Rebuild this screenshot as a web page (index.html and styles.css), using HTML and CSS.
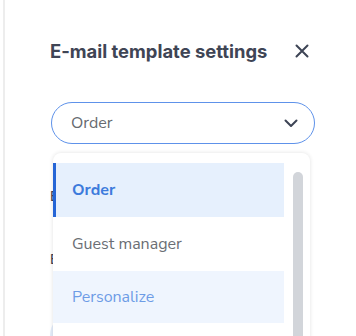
FILE: index.html
```html
<!DOCTYPE html>
<html lang="en">
<head>
    <meta charset="UTF-8">
    <title>E-mail template settings</title>
    <link rel="stylesheet" href="styles.css">
</head>
<body>
<div class="panel">
    <div class="panelhead">
        <div class="paneltitle">E-mail template settings</div>
        <div class="panelclose">
            <svg width="14" height="14" viewBox="0 0 14 14"><path d="M1.5 1.5L12.5 12.5M12.5 1.5L1.5 12.5" stroke="#3d4455" stroke-width="2" stroke-linecap="round"/></svg>
        </div>
    </div>

    <div class="selectbox">
        <div class="selecttext">Order</div>
        <svg class="selectarrow" width="14" height="9" viewBox="0 0 14 9"><path d="M1.5 1.5L7 7L12.5 1.5" fill="none" stroke="#3d4455" stroke-width="2" stroke-linecap="round" stroke-linejoin="round"/></svg>
    </div>

    <div class="formrow">
        <div class="formlabel">E</div>
    </div>
    <div class="formrow">
        <div class="formlabel">E</div>
        <div class="forminput"></div>
    </div>

    <div class="dropmenu">
        <div class="droplist">
            <div class="dropitem active">Order</div>
            <div class="dropitem">Guest manager</div>
            <div class="dropitem hover">Personalize</div>
        </div>
        <div class="dropscroll"><div class="dropthumb"></div></div>
    </div>
</div>
</body>
</html>
```

FILE: styles.css
```css
html, body{
    margin: 0;
    padding: 0;
    background: #ffffff;
}

body{
    font-family: "Nunito Sans", "Open Sans", "Liberation Sans", sans-serif;
    overflow: hidden;
}

.panel{
    position: relative;
    height: 336px;
    margin-left: 3px;
    border-left: 2px solid #ededed;
    padding-left: 45px;
    padding-right: 40px;
    box-sizing: border-box;
}

.panelhead{
    display: flex;
    align-items: center;
    justify-content: space-between;
    padding-top: 38px;
    height: 26px;
    padding-right: 7px;
}

.paneltitle{
    font-family: Inter, "Liberation Sans", sans-serif;
    font-size: 18.4px;
    font-weight: 700;
    color: #3f4555;
}

.panelclose{
    width: 14px;
    height: 14px;
    display: flex;
}

.selectbox{
    margin-top: 38px;
    height: 40px;
    border: 1.5px solid #5e92ea;
    border-radius: 22px;
    display: flex;
    align-items: center;
    justify-content: space-between;
    padding: 0 16px 0 19px;
    margin-left: 1px;
    margin-right: 1px;
}

.selecttext{
    font-size: 16px;
    color: #666a70;
}

.selectarrow{
    margin-top: 1px;
}

.formrow{
    margin-top: 43px;
}

.formlabel{
    font-size: 14px;
    font-weight: 600;
    color: #3f4555;
    height: 20px;
}

.forminput{
    width: 40px;
    height: 40px;
    margin-top: 45px;
    border-radius: 20px;
    background: #e4edfa;
}

.dropmenu{
    position: absolute;
    left: 48px;
    top: 153px;
    width: 257px;
    height: 200px;
    background: #ffffff;
    border-radius: 8px;
    box-shadow: 0 0 4px rgba(0, 0, 0, 0.12);
    display: flex;
    padding-top: 10px;
    box-sizing: border-box;
}

.droplist{
    width: 231px;
}

.dropitem{
    height: 54px;
    line-height: 54px;
    padding-left: 19px;
    font-size: 16px;
    color: #6a6e74;
    box-sizing: border-box;
}

.dropitem.active{
    background: #e6f0fd;
    border-left: 3px solid #2565d6;
    padding-left: 16px;
    color: #3d7bdc;
    font-weight: 700;
}

.dropitem.hover{
    background: #eff5fe;
    color: #6d9ce6;
    height: 52px;
    line-height: 52px;
}

.dropscroll{
    margin-left: 9px;
    padding-top: 9px;
}

.dropthumb{
    width: 10px;
    height: 200px;
    background: #d2d5da;
    border-radius: 5px;
}
```
